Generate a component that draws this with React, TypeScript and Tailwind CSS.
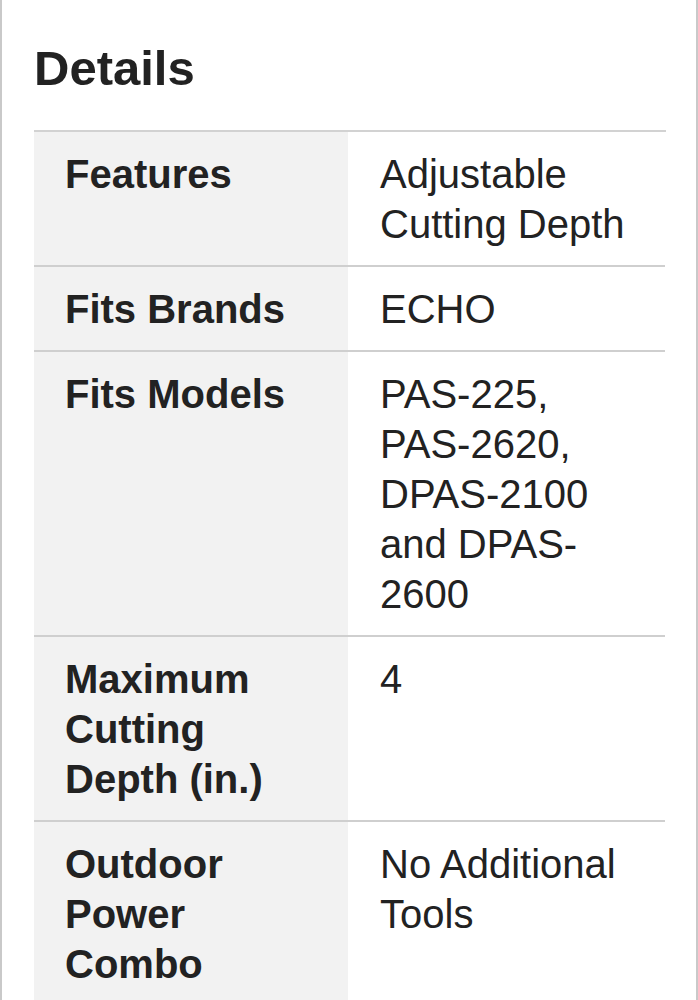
const rows: { label: string; value: React.ReactNode }[] = [
  { label: "Features", value: "Adjustable Cutting Depth" },
  { label: "Fits Brands", value: "ECHO" },
  {
    label: "Fits Models",
    value: (
      <>
        PAS-225, PAS-2620, DPAS-2100 and DPAS-<wbr />2600
      </>
    ),
  },
  { label: "Maximum Cutting Depth (in.)", value: "4" },
  { label: "Outdoor Power Combo", value: "No Additional Tools" },
]

export default function App() {
  return (
    <div
      className="h-[1000px] w-[698px] overflow-hidden border-x-[2px] border-[#c9c9c9] bg-white pl-[32px] pr-[30px] text-[#222]"
      style={{ fontFamily: '"Liberation Sans", Arial, sans-serif' }}
    >
      <h1 className="pt-[44px] pb-[37px] text-[49px] font-bold leading-none">Details</h1>
      <div className="grid grid-cols-[314px_317px] border-t-[2px] border-[#d2d2d2]">
        {rows.map((row, i) => (
          <div key={row.label} className="contents">
            <div
              className={`bg-[#f2f2f2] pl-[31px] pr-[31px] pb-[16px] pt-[17px] text-[40px] font-bold leading-[50px] ${
                i > 0 ? "border-t-[2px] border-[#cfcfcf]" : ""
              }`}
            >
              {row.label}
            </div>
            <div
              className={`bg-white pl-[32px] pr-[32px] pb-[16px] pt-[17px] text-[40px] leading-[50px] ${
                i > 0 ? "border-t-[2px] border-[#cfcfcf]" : ""
              }`}
            >
              {row.value}
            </div>
          </div>
        ))}
      </div>
    </div>
  )
}
